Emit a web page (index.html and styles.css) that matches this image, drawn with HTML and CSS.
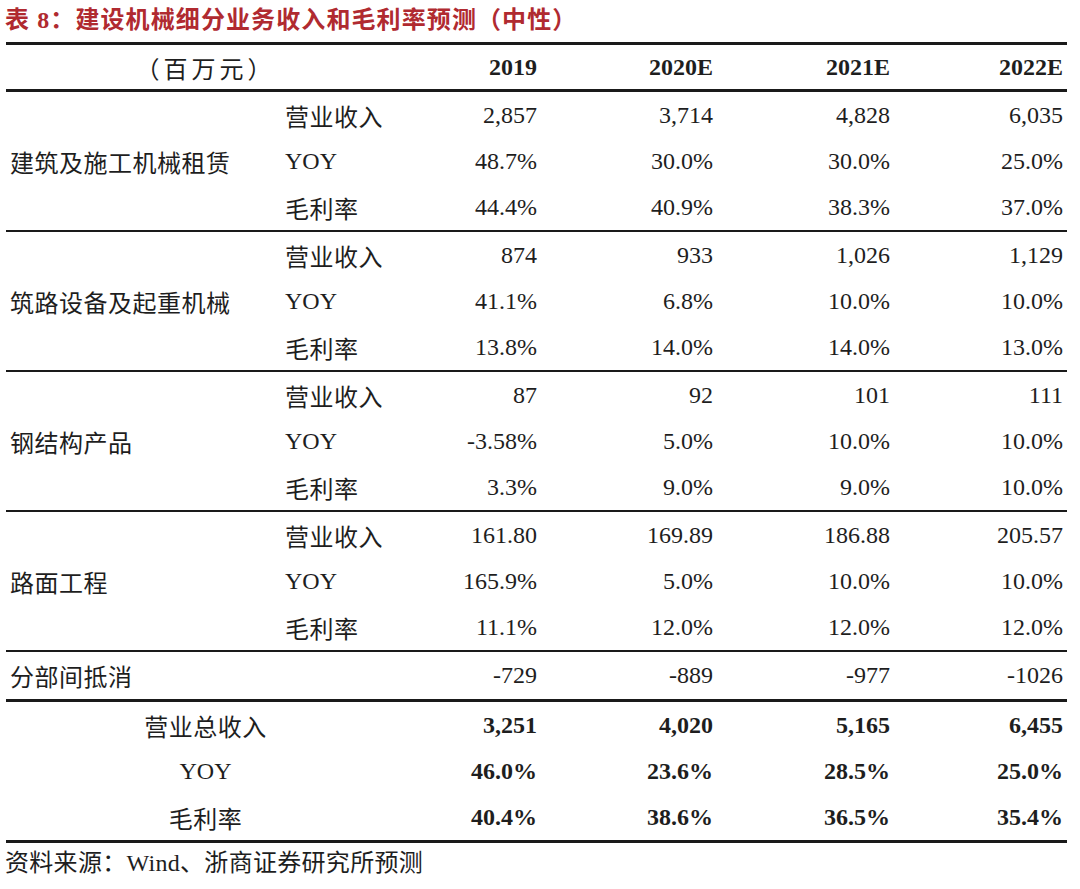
FILE: index.html
```html
<!DOCTYPE html>
<html lang="zh-CN">
<head>
<meta charset="utf-8">
<title>表 8：建设机械细分业务收入和毛利率预测（中性）</title>
<link rel="stylesheet" href="styles.css">
</head>
<body>
<div class="page">
  <h1 class="caption">表 8：建设机械细分业务收入和毛利率预测（中性）</h1>
  <table class="fc">
    <colgroup>
      <col class="c-cat"><col class="c-sub"><col class="c-y1"><col class="c-y2"><col class="c-y3"><col class="c-y4">
    </colgroup>
    <thead>
      <tr>
        <th colspan="2" class="unit">（百万元）</th>
        <th>2019</th><th>2020E</th><th>2021E</th><th>2022E</th>
      </tr>
    </thead>
    <tbody class="grp">
      <tr><td rowspan="3" class="cat">建筑及施工机械租赁</td><td class="sub">营业收入</td><td>2,857</td><td>3,714</td><td>4,828</td><td>6,035</td></tr>
      <tr><td class="sub en">YOY</td><td>48.7%</td><td>30.0%</td><td>30.0%</td><td>25.0%</td></tr>
      <tr><td class="sub">毛利率</td><td>44.4%</td><td>40.9%</td><td>38.3%</td><td>37.0%</td></tr>
    </tbody>
    <tbody class="grp">
      <tr><td rowspan="3" class="cat">筑路设备及起重机械</td><td class="sub">营业收入</td><td>874</td><td>933</td><td>1,026</td><td>1,129</td></tr>
      <tr><td class="sub en">YOY</td><td>41.1%</td><td>6.8%</td><td>10.0%</td><td>10.0%</td></tr>
      <tr><td class="sub">毛利率</td><td>13.8%</td><td>14.0%</td><td>14.0%</td><td>13.0%</td></tr>
    </tbody>
    <tbody class="grp">
      <tr><td rowspan="3" class="cat">钢结构产品</td><td class="sub">营业收入</td><td>87</td><td>92</td><td>101</td><td>111</td></tr>
      <tr><td class="sub en">YOY</td><td>-3.58%</td><td>5.0%</td><td>10.0%</td><td>10.0%</td></tr>
      <tr><td class="sub">毛利率</td><td>3.3%</td><td>9.0%</td><td>9.0%</td><td>10.0%</td></tr>
    </tbody>
    <tbody class="grp">
      <tr><td rowspan="3" class="cat">路面工程</td><td class="sub">营业收入</td><td>161.80</td><td>169.89</td><td>186.88</td><td>205.57</td></tr>
      <tr><td class="sub en">YOY</td><td>165.9%</td><td>5.0%</td><td>10.0%</td><td>10.0%</td></tr>
      <tr><td class="sub">毛利率</td><td>11.1%</td><td>12.0%</td><td>12.0%</td><td>12.0%</td></tr>
    </tbody>
    <tbody class="elim">
      <tr><td colspan="2" class="cat">分部间抵消</td><td>-729</td><td>-889</td><td>-977</td><td>-1026</td></tr>
    </tbody>
    <tbody class="total">
      <tr><td colspan="2" class="tl">营业总收入</td><td>3,251</td><td>4,020</td><td>5,165</td><td>6,455</td></tr>
      <tr><td colspan="2" class="tl en">YOY</td><td>46.0%</td><td>23.6%</td><td>28.5%</td><td>25.0%</td></tr>
      <tr><td colspan="2" class="tl">毛利率</td><td>40.4%</td><td>38.6%</td><td>36.5%</td><td>35.4%</td></tr>
    </tbody>
  </table>
  <p class="source">资料来源：Wind、浙商证券研究所预测</p>
</div>
</body>
</html>
```
FILE: styles.css
```css
html, body {
  margin: 0;
  padding: 0;
  background: #ffffff;
}
body {
  font-family: "Liberation Serif", "Noto Sans CJK SC", serif;
  color: #1e1e1e;
}
.page {
  width: 1080px;
  height: 889px;
  overflow: hidden;
}
.caption {
  margin: 0;
  padding: 0 0 0 5px;
  height: 42px;
  line-height: 40px;
  font-size: 24px;
  font-weight: bold;
  color: #b02a30;
  letter-spacing: 1.1px;
  white-space: nowrap;
}
.fc {
  margin-left: 6px;
  width: 1061px;
  table-layout: fixed;
  border-collapse: separate;
  border-spacing: 0;
  font-size: 24px;
}
.c-cat { width: 274px; }
.c-sub { width: 125px; }
.c-y1 { width: 136px; }
.c-y2 { width: 176px; }
.c-y3 { width: 177px; }
.c-y4 { width: 173px; }

.fc th {
  height: 44px;
  padding: 0 4px 0 0;
  text-align: right;
  font-weight: bold;
  border-top: 3px solid #1a1a1a;
  border-bottom: 3px solid #1a1a1a;
  box-sizing: content-box;
  white-space: nowrap;
}
.fc th.unit {
  text-align: center;
  font-weight: normal;
  letter-spacing: 4px;
  padding: 0;
}
.fc td {
  height: 46px;
  padding: 0 4px 0 0;
  text-align: right;
  white-space: nowrap;
  box-sizing: content-box;
}
.fc td.cat {
  text-align: left;
  padding-left: 4px;
  letter-spacing: 0.5px;
}
.fc td.sub {
  text-align: left;
  padding-left: 5px;
  letter-spacing: 0.5px;
}
.fc td.en { letter-spacing: 0; }
.grp tr:last-child td,
.grp td.cat {
  border-bottom: 2px solid #1a1a1a;
}
.elim td {
  height: 47px;
  border-bottom: 3px solid #1a1a1a;
}
.total td {
  font-weight: bold;
}
.total td.tl {
  font-weight: normal;
  text-align: center;
  padding: 0;
  letter-spacing: 0.5px;
}
.total td.tl.en { letter-spacing: 0; }
.total tr:last-child td {
  border-bottom: 3px solid #1a1a1a;
}
.source {
  margin: 0;
  padding: 6px 0 0 5px;
  font-size: 24px;
  line-height: 28px;
  color: #1e1e1e;
  letter-spacing: 0.3px;
  white-space: nowrap;
}
```
